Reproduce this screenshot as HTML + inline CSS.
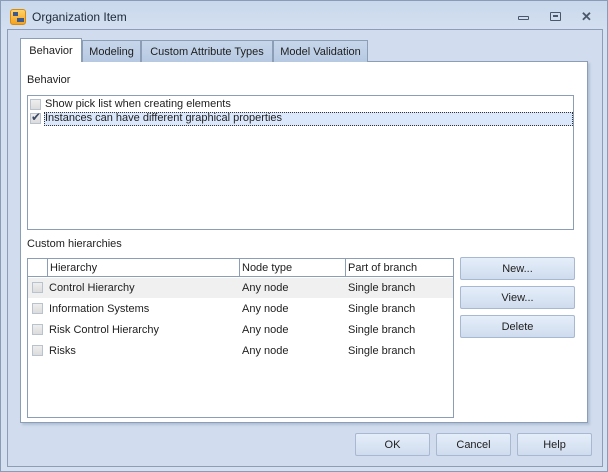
<!DOCTYPE html>
<html><head><style>
*{box-sizing:border-box;margin:0;padding:0}
body{width:608px;height:472px;overflow:hidden;font-family:"Liberation Sans",Tahoma,sans-serif;font-size:11px;color:#1e1e1e;position:relative;background:#d3dff0}
.a{position:absolute}
.win{left:0;top:0;width:608px;height:472px;border:1px solid #8a9bb5;background:linear-gradient(#c9d8ec,#d4e0f0 30px,#d4e0f0)}
.frame{left:7px;top:29px;width:596px;height:438px;border:1px solid #8c9db6;background:#d1ddee}
.panel{left:20px;top:61px;width:568px;height:362px;background:#fff;border:1px solid #8c9db6;box-shadow:2px 2px 2px rgba(120,140,170,.35)}
.tab{top:40px;height:22px;border:1px solid #8c9db6;border-bottom:none;background:linear-gradient(#c7d6ea,#b6c9e2);padding-top:5px;text-align:center;font-size:11px}
.tab.sel{background:#fff;top:38px;height:24px;padding-top:6px}
.box{border:1px solid #8c9db6;background:#fff}
.cb{width:11px;height:11px;border:1px solid #b9c2cf;background:linear-gradient(#eee,#dcdcdc)}
.btn{height:23px;border:1px solid #a8b8d0;border-radius:2px;background:linear-gradient(#e5eefa,#cfdcee);text-align:center;padding-top:5px;font-size:11px}
.t{font-size:11px;white-space:nowrap}
</style></head><body>
<div class="a win"></div>
<div class="a" style="left:10px;top:9px;width:16px;height:16px;border-radius:3px;background:linear-gradient(#ffd36a,#f4a21f);border:1px solid #d68a10"></div>
<div class="a" style="left:13px;top:12px;width:5px;height:4px;background:#3d5a8a"></div>
<div class="a" style="left:17px;top:18px;width:7px;height:4px;background:#3d5a8a"></div>
<div class="a t" style="left:32px;top:10px;font-size:12px;color:#1e2a3a">Organization Item</div>
<div class="a" style="left:518px;top:16px;width:11px;height:4px;border:1px solid #4a566c;border-radius:1px"></div>
<div class="a" style="left:550px;top:12px;width:11px;height:9px;border:1px solid #4a566c;border-radius:1px"></div>
<div class="a" style="left:553px;top:15px;width:5px;height:2px;background:#4a566c"></div>
<div class="a t" style="left:581px;top:9px;font-size:13px;font-weight:bold;color:#4a566c">✕</div>
<div class="a frame"></div>
<div class="a panel"></div>
<div class="a tab sel" style="left:20px;width:62px">Behavior</div>
<div class="a tab" style="left:82px;width:59px">Modeling</div>
<div class="a tab" style="left:141px;width:132px">Custom Attribute Types</div>
<div class="a tab" style="left:273px;width:95px">Model Validation</div>
<div class="a t" style="left:27px;top:74px">Behavior</div>
<div class="a box" style="left:27px;top:95px;width:547px;height:135px"></div>
<div class="a cb" style="left:30px;top:99px"></div>
<div class="a t" style="left:45px;top:98px">Show pick list when creating elements</div>
<div class="a" style="left:44px;top:112px;width:529px;height:14px;background:#dbe8fb;border:1px dotted #333"></div>
<div class="a cb" style="left:30px;top:113px"></div>
<div class="a t" style="left:31px;top:110px;font-size:12px;color:#3b4a66">✔</div>
<div class="a t" style="left:45px;top:112px">Instances can have different graphical properties</div>
<div class="a t" style="left:27px;top:238px">Custom hierarchies</div>
<div class="a box" style="left:27px;top:258px;width:427px;height:160px"></div>
<div class="a" style="left:28px;top:259px;width:425px;height:18px;background:#fff;border-bottom:1px solid #8c9db6"></div>
<div class="a" style="left:47px;top:259px;width:1px;height:18px;background:#8c9db6"></div>
<div class="a" style="left:239px;top:259px;width:1px;height:18px;background:#8c9db6"></div>
<div class="a" style="left:345px;top:259px;width:1px;height:18px;background:#8c9db6"></div>
<div class="a t" style="left:50px;top:262px">Hierarchy</div>
<div class="a t" style="left:242px;top:262px">Node type</div>
<div class="a t" style="left:348px;top:262px">Part of branch</div>
<div class="a" style="left:28px;top:278px;width:425px;height:20px;background:#f0f0f0"></div>
<div class="a cb" style="left:32px;top:282px"></div><div class="a t" style="left:49px;top:282px">Control Hierarchy</div><div class="a t" style="left:242px;top:282px">Any node</div><div class="a t" style="left:348px;top:282px">Single branch</div>
<div class="a cb" style="left:32px;top:303px"></div><div class="a t" style="left:49px;top:303px">Information Systems</div><div class="a t" style="left:242px;top:303px">Any node</div><div class="a t" style="left:348px;top:303px">Single branch</div>
<div class="a cb" style="left:32px;top:324px"></div><div class="a t" style="left:49px;top:324px">Risk Control Hierarchy</div><div class="a t" style="left:242px;top:324px">Any node</div><div class="a t" style="left:348px;top:324px">Single branch</div>
<div class="a cb" style="left:32px;top:345px"></div><div class="a t" style="left:49px;top:345px">Risks</div><div class="a t" style="left:242px;top:345px">Any node</div><div class="a t" style="left:348px;top:345px">Single branch</div>
<div class="a btn" style="left:460px;top:257px;width:115px">New...</div>
<div class="a btn" style="left:460px;top:286px;width:115px">View...</div>
<div class="a btn" style="left:460px;top:315px;width:115px">Delete</div>
<div class="a btn" style="left:355px;top:433px;width:75px">OK</div>
<div class="a btn" style="left:436px;top:433px;width:75px">Cancel</div>
<div class="a btn" style="left:517px;top:433px;width:75px">Help</div>
</body></html>
